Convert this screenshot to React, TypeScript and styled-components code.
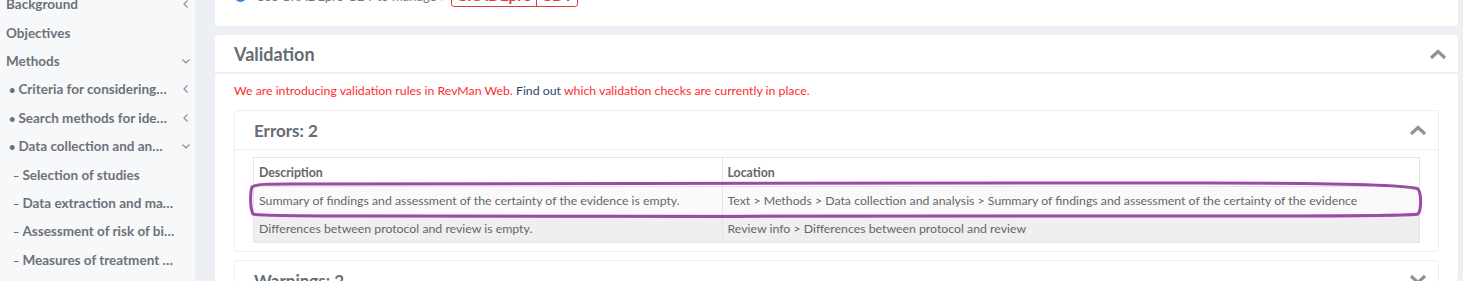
import styled, { createGlobalStyle } from "styled-components";

const GlobalStyle = createGlobalStyle`
  html, body {
    margin: 0;
    padding: 0;
    background: #eceff3;
    overflow: hidden;
  }
  body {
    font-family: "Lato", "Open Sans", sans-serif;
  }
`;

type NavItem = { label: string; level: 0 | 1 | 2; arrow?: "left" | "down" };

const navItems: NavItem[] = [
  { label: "Background", level: 0, arrow: "left" },
  { label: "Objectives", level: 0 },
  { label: "Methods", level: 0, arrow: "down" },
  { label: "Criteria for considering studies for this review", level: 1, arrow: "left" },
  { label: "Search methods for identification of studies", level: 1, arrow: "left" },
  { label: "Data collection and analysis", level: 1, arrow: "down" },
  { label: "Selection of studies", level: 2 },
  { label: "Data extraction and management", level: 2 },
  { label: "Assessment of risk of bias in included studies", level: 2 },
  { label: "Measures of treatment effect", level: 2 },
];

const errors = [
  {
    description:
      "Summary of findings and assessment of the certainty of the evidence is empty.",
    location:
      "Text > Methods > Data collection and analysis > Summary of findings and assessment of the certainty of the evidence",
  },
  {
    description: "Differences between protocol and review is empty.",
    location: "Review info > Differences between protocol and review",
  },
];

const SmallChevron = ({ dir }: { dir: "left" | "down" }) => (
  <svg width="10" height="10" viewBox="0 0 10 10">
    {dir === "left" ? (
      <path d="M6.5 1.5 L3 5 L6.5 8.5" fill="none" stroke="#8a8f96" strokeWidth="1.2" />
    ) : (
      <path d="M1.5 3.5 L5 7 L8.5 3.5" fill="none" stroke="#8a8f96" strokeWidth="1.2" />
    )}
  </svg>
);

const BigChevron = ({ dir }: { dir: "up" | "down" }) => (
  <svg width="18" height="12" viewBox="0 0 18 12">
    {dir === "up" ? (
      <path d="M2 10 L9 3.5 L16 10" fill="none" stroke="#8f9398" strokeWidth="3.2" />
    ) : (
      <path d="M2 2 L9 8.5 L16 2" fill="none" stroke="#8f9398" strokeWidth="3.2" />
    )}
  </svg>
);

export default function App() {
  return (
    <>
      <GlobalStyle />
      <Page>
        <Sidebar>
          {navItems.map((item) => (
            <NavRow key={item.label} $level={item.level}>
              <NavLabel>
                {item.level === 1 && <Bullet>•</Bullet>}
                {item.level === 2 && <Bullet>–</Bullet>}
                {item.label}
              </NavLabel>
              {item.arrow && <SmallChevron dir={item.arrow} />}
            </NavRow>
          ))}
        </Sidebar>
        <Main>
          <TopCard>
            <RadioRow>
              <Radio />
              <FadedText>Use GRADEpro GDT to manage this table</FadedText>
              <Badge>
                <BadgePart>GRADEpro</BadgePart>
                <BadgePart>GDT</BadgePart>
              </Badge>
            </RadioRow>
          </TopCard>
          <Card>
            <CardHeader>
              <CardTitle>Validation</CardTitle>
              <BigChevron dir="up" />
            </CardHeader>
            <CardBody>
              <Notice>
                We are introducing validation rules in RevMan Web. <NoticeLink>Find out</NoticeLink>{" "}
                which validation checks are currently in place.
              </Notice>
              <InnerCard>
                <InnerHeader>
                  <InnerTitle>Errors: 2</InnerTitle>
                  <BigChevron dir="up" />
                </InnerHeader>
                <InnerBody>
                  <TableWrap>
                    <Table>
                      <thead>
                        <tr>
                          <Th $w={40}>Description</Th>
                          <Th $w={60}>Location</Th>
                        </tr>
                      </thead>
                      <tbody>
                        {errors.map((e, i) => (
                          <Tr key={i} $striped={i % 2 === 1}>
                            <Td>{e.description}</Td>
                            <Td>{e.location}</Td>
                          </Tr>
                        ))}
                      </tbody>
                    </Table>
                    <Highlight viewBox="0 0 1176 38" preserveAspectRatio="none">
                      <path
                        d="M40 3 C200 1 600 2 960 2 C1050 2 1160 3 1170 8 C1174 14 1173 30 1170 33 C1160 36 1000 35 800 35 C600 36 300 35 120 35 C60 35 10 35 5 33 C2 28 2 12 4 6 C8 3 20 3 40 3 Z"
                        fill="none"
                        stroke="#9c4aa8"
                        strokeWidth="3"
                        vectorEffect="non-scaling-stroke"
                      />
                    </Highlight>
                  </TableWrap>
                </InnerBody>
              </InnerCard>
              <InnerCard>
                <InnerHeader>
                  <InnerTitle>Warnings: 2</InnerTitle>
                  <BigChevron dir="down" />
                </InnerHeader>
              </InnerCard>
            </CardBody>
          </Card>
        </Main>
      </Page>
    </>
  );
}

const Page = styled.div`
  display: flex;
  width: 1463px;
  height: 281px;
  overflow: hidden;
`;

const Sidebar = styled.nav`
  width: 195px;
  flex-shrink: 0;
  background: #f7f8fa;
  margin-top: -10px;
`;

const NavRow = styled.div<{ $level: number }>`
  display: flex;
  align-items: center;
  justify-content: space-between;
  height: 28.4px;
  padding-left: ${({ $level }) => ($level === 0 ? 6 : $level === 1 ? 9 : 13)}px;
  padding-right: 4px;
  color: #6c7279;
  font-size: 13.5px;
  font-weight: 700;
`;

const NavLabel = styled.span`
  flex: 1;
  min-width: 0;
  white-space: nowrap;
  overflow: hidden;
  text-overflow: ellipsis;
  padding-right: 14px;
`;

const Bullet = styled.span`
  font-size: 11px;
  margin-right: 3px;
`;

const Main = styled.main`
  flex: 1;
  min-width: 0;
  height: 281px;
  padding: 0 5px 0 20px;
  display: flex;
  flex-direction: column;
  gap: 9px;
`;

const TopCard = styled.section`
  flex-shrink: 0;
  background: #fff;
  height: 26px;
  border-radius: 0 0 3px 3px;
  overflow: hidden;
`;

const RadioRow = styled.div`
  display: flex;
  align-items: center;
  gap: 9px;
  margin-top: -16px;
  padding-left: 19px;
`;

const Radio = styled.span`
  width: 13px;
  height: 13px;
  border-radius: 50%;
  background: #3b87d9;
`;

const FadedText = styled.span`
  color: #777;
  font-size: 13px;
  width: 186px;
  white-space: nowrap;
  overflow: hidden;
`;

const Badge = styled.span`
  display: flex;
  border: 1.5px solid #d83c3c;
  border-radius: 3px;
  color: #d83c3c;
  font-weight: 700;
  font-size: 15.5px;
  line-height: 21px;
`;

const BadgePart = styled.span`
  padding: 0 4px;
  & + & {
    border-left: 1.5px solid #d83c3c;
  }
`;

const Card = styled.section`
  flex: 1;
  min-height: 0;
  background: #fff;
  border-radius: 3px;
  overflow: hidden;
`;

const CardHeader = styled.header`
  display: flex;
  align-items: center;
  justify-content: space-between;
  height: 37px;
  padding: 0 11px 0 19px;
  border-bottom: 2px solid #eef0f3;
`;

const CardTitle = styled.h2`
  margin: 0;
  font-size: 18px;
  font-weight: 700;
  color: #666c73;
`;

const CardBody = styled.div`
  padding: 8px 19px 0;
  display: flex;
  flex-direction: column;
  gap: 8px;
`;

const Notice = styled.p`
  margin: 0 0 2px;
  color: #ff2b2b;
  font-size: 12.3px;
  line-height: 18px;
`;

const NoticeLink = styled.span`
  color: #2b4668;
`;

const InnerCard = styled.div`
  flex-shrink: 0;
  border: 1px solid #eceef1;
  border-radius: 3px;
`;

const InnerHeader = styled.div`
  display: flex;
  align-items: center;
  justify-content: space-between;
  height: 38px;
  padding: 0 11px 0 19px;
  border-bottom: 1px solid #eceef1;
`;

const InnerTitle = styled.h3`
  margin: 0;
  font-size: 17px;
  font-weight: 700;
  color: #666c73;
`;

const InnerBody = styled.div`
  padding: 7px 18px 8px;
`;

const TableWrap = styled.div`
  position: relative;
`;

const Table = styled.table`
  width: 100%;
  table-layout: fixed;
  border-collapse: collapse;
  border: 1px solid #e4e4e4;
  font-size: 12.3px;
  color: #666;
`;

const Th = styled.th<{ $w: number }>`
  width: ${({ $w }) => $w}%;
  text-align: left;
  font-weight: 700;
  height: 28px;
  padding: 0 5px;
  border-left: 1px solid #e4e4e4;
  border-bottom: 1px solid #e4e4e4;
`;

const Tr = styled.tr<{ $striped: boolean }>`
  background: ${({ $striped }) => ($striped ? "#efefef" : "#fafafa")};
`;

const Td = styled.td`
  height: 27px;
  padding: 0 5px;
  white-space: nowrap;
  border-left: 1px solid #e4e4e4;
  border-bottom: 1px solid #e4e4e4;
`;

const Highlight = styled.svg`
  position: absolute;
  left: -5px;
  top: 24px;
  width: 1176px;
  height: 38px;
  pointer-events: none;
  overflow: visible;
`;
